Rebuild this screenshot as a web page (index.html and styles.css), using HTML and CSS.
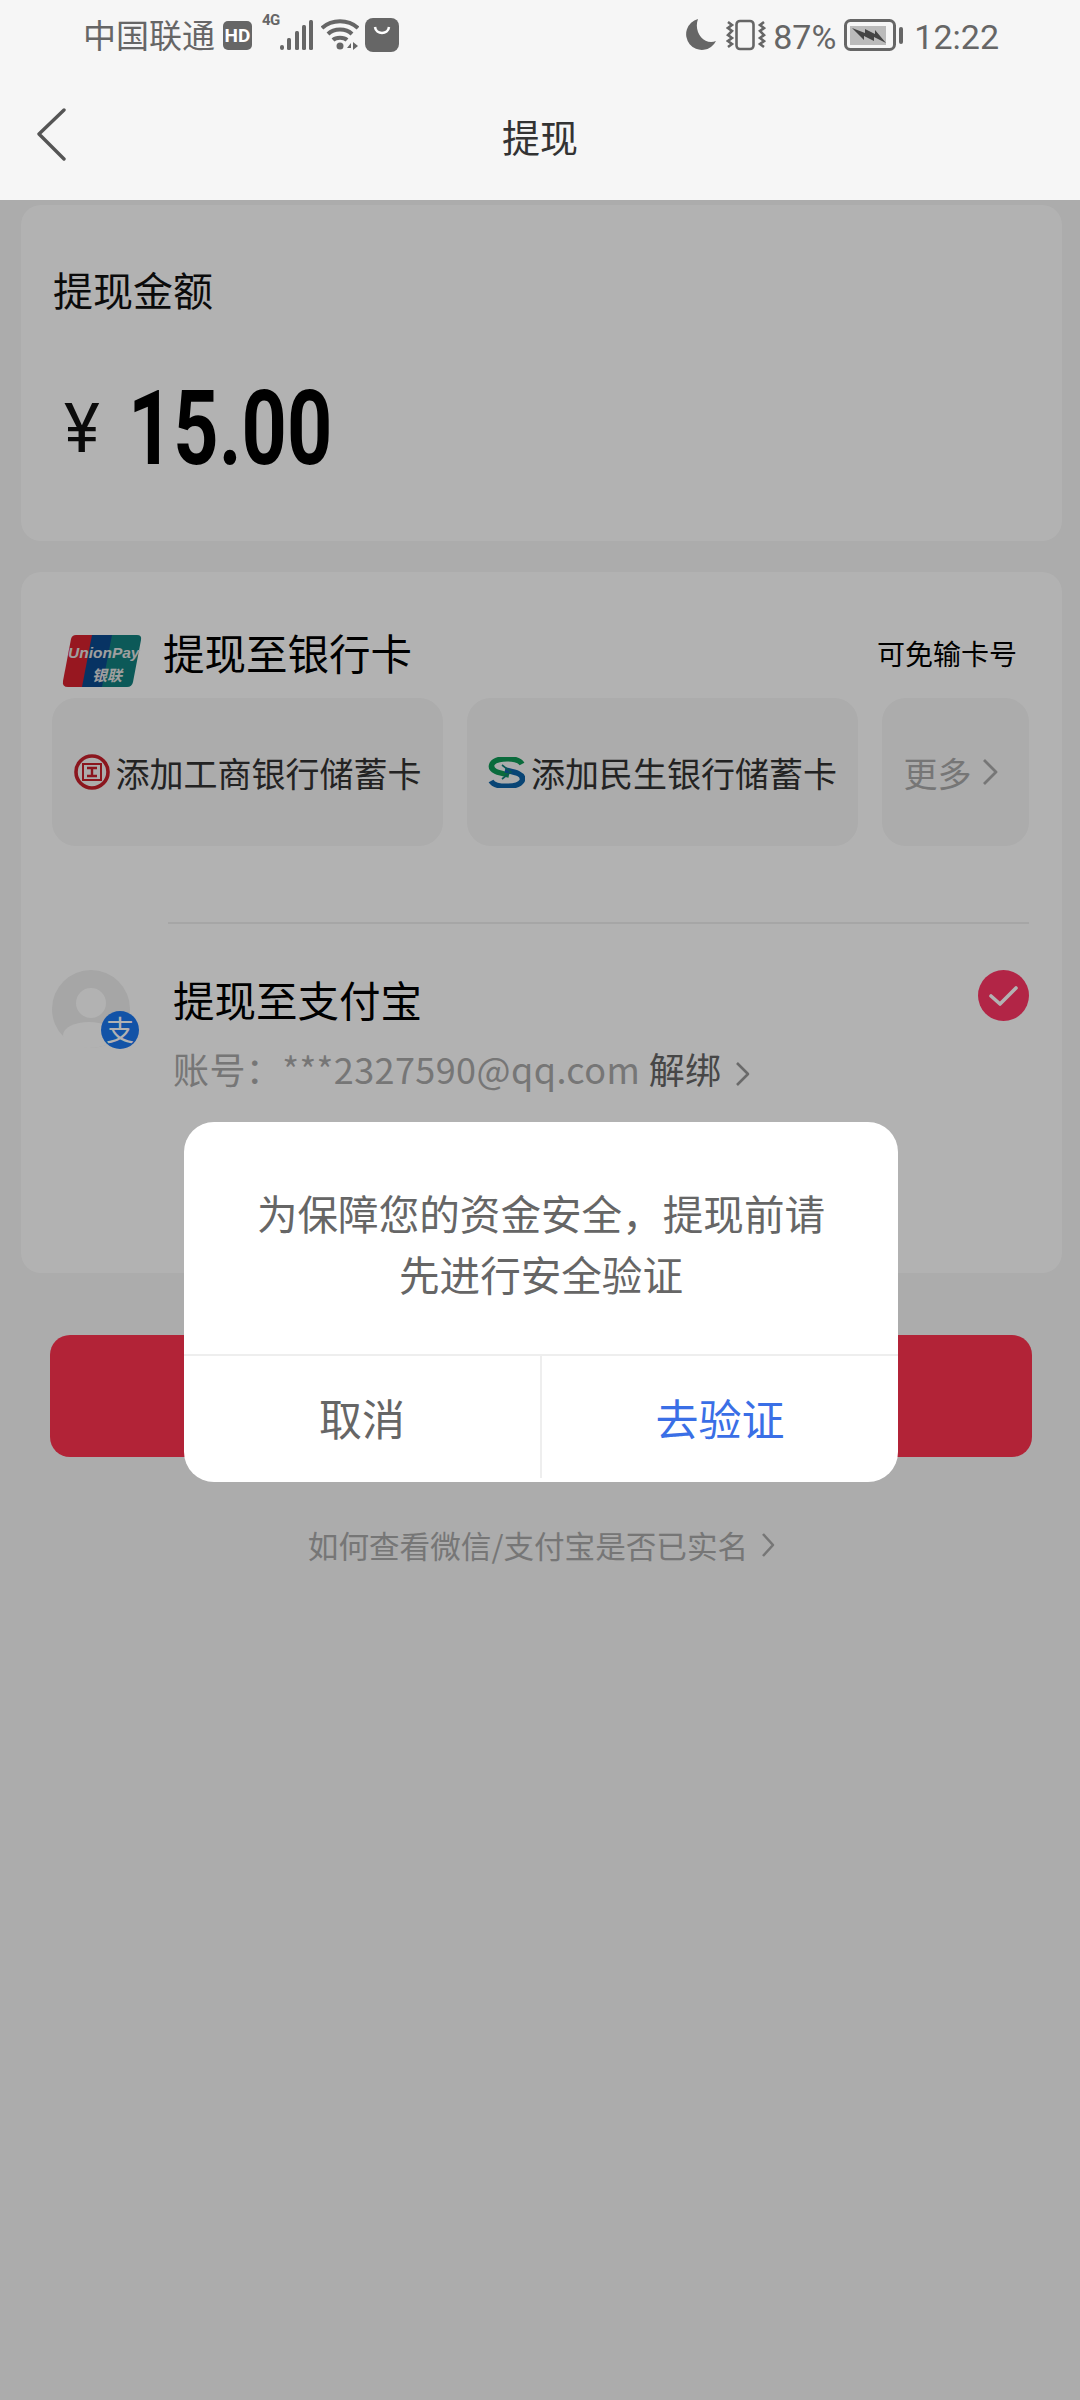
FILE: index.html
```html
<!DOCTYPE html>
<html lang="zh-CN">
<head>
  <meta charset="UTF-8" />
  <title>提现</title>
  <meta name="viewport" content="width=device-width, initial-scale=1.0" />
  <link rel="stylesheet" href="styles.css">
</head>
<body>
  <div class="top">
    <div class="status">
      <span class="carrier">中国联通</span>
      <span class="hd">HD</span>
      <span class="net">4G</span>
      <svg class="signal" width="34" height="33" viewBox="0 0 34 33" fill="#666">
        <rect x="0" y="26" width="4" height="5" rx="2"/>
        <rect x="7" y="19" width="4" height="12" rx="1.5"/>
        <rect x="15" y="12" width="4" height="19" rx="1.5"/>
        <rect x="22" y="6" width="4" height="25" rx="1.5"/>
        <rect x="29" y="1" width="4" height="30" rx="1.5"/>
      </svg>
      <svg class="wifi" width="38" height="33" viewBox="0 0 38 33" fill="none" stroke="#666" stroke-width="4">
        <path d="M1 9C11 0 27 0 37 9"/>
        <path d="M7 15C13 9 25 9 31 15"/>
        <path d="M12 21C15 18 23 18 26 21"/>
        <circle cx="19" cy="27" r="3.5" fill="#666" stroke="none"/>
        <path d="M30 24l-4 5h4zM32 23v8l5-4z" fill="#666" stroke="none"/>
      </svg>
      <svg class="bag" width="34" height="34" viewBox="0 0 34 34">
        <rect width="34" height="34" rx="8" fill="#666"/>
        <path d="M10 9c1 8 13 8 14 0" fill="none" stroke="#fff" stroke-width="2.5"/>
      </svg>
      <svg class="moon" width="32" height="32" viewBox="0 0 32 32" fill="#666">
        <path d="M13 0A15.7 15.7 0 1 0 31 22C20 27 8 14 13 0Z"/>
      </svg>
      <svg class="vibrate" width="40" height="32" viewBox="0 0 40 32" fill="none" stroke="#666" stroke-width="2.6">
        <rect x="10.5" y="2" width="17" height="28" rx="3.5"/>
        <path d="M2 3l4 3-4 3 4 3-4 4 4 3-4 3 4 3-4 3"/>
        <path d="M38 3l-4 3 4 3-4 3 4 4-4 3 4 3-4 3 4 3"/>
      </svg>
      <span class="percent">87%</span>
      <svg class="battery" width="60" height="32" viewBox="0 0 60 32">
        <rect x="1.5" y="1.5" width="49" height="29" rx="5" fill="none" stroke="#666" stroke-width="3"/>
        <rect x="6" y="7" width="36" height="19" fill="#bbb"/>
        <path d="M8 9l13 5 0-4 10 5 0-4 11 13-12-6 0 4-10-5 0 4z" fill="#444"/>
        <rect x="55" y="8" width="4" height="17" rx="2" fill="#666"/>
      </svg>
      <span class="time">12:22</span>
    </div>
    <div class="nav">
      <svg class="back" width="30" height="56" viewBox="0 0 30 56" fill="none" stroke="#555" stroke-width="3.4" stroke-linecap="round" stroke-linejoin="round">
        <path d="M27 3L2 27l25 25"/>
      </svg>
      <span class="nav-title">提现</span>
    </div>
  </div>

  <div class="page">
    <div class="card amount-card">
      <div class="amount-label">提现金额</div>
      <div class="amount">
        <span class="yen">¥</span>
        <span class="value">15.00</span>
      </div>
    </div>

    <div class="card methods">
      <div class="bank-head">
        <svg class="unionpay" width="80" height="52" viewBox="0 0 80 52">
          <path d="M14 0h22l-10 52H6q-6 0-5-6l8-42q1-4 5-4z" fill="#d8222f"/>
          <path d="M30 0h24l-10 52H20z" fill="#0b4a8f"/>
          <path d="M50 0h25q5 0 4 5l-8 42q-1 5-6 5H40z" fill="#12807f"/>
          <text x="6" y="23" class="up-latin">UnionPay</text>
          <text x="30" y="46" class="up-cjk">银联</text>
        </svg>
        <span class="section-title">提现至银行卡</span>
        <span class="no-card">可免输卡号</span>
      </div>

      <div class="tiles">
        <div class="tile">
          <svg width="36" height="36" viewBox="0 0 36 36" fill="none" stroke="#c8202c">
            <circle cx="18" cy="18" r="16" stroke-width="3.6"/>
            <path d="M9 10h18v16H9z" stroke-width="2"/>
            <path d="M13 14h10M18 14v8M13 22h10" stroke-width="2.4"/>
          </svg>
          <span>添加工商银行储蓄卡</span>
        </div>
        <div class="tile">
          <svg width="37" height="31" viewBox="0 0 37 31" fill="none">
            <path d="M34 7C30 0 8 0 4 7c-3 7 7 9 17 11" stroke="#0f9a57" stroke-width="5.5"/>
            <path d="M3 24c4 7 27 7 31 0 3-7-7-9-17-11" stroke="#0d64a8" stroke-width="5.5"/>
            <path d="M14 8l9 7-9 7" stroke="#0f7f7a" stroke-width="1.6"/>
          </svg>
          <span>添加民生银行储蓄卡</span>
        </div>
        <div class="tile tile-more">
          <span>更多</span>
          <svg class="chev" width="16" height="28" viewBox="0 0 16 28" fill="none" stroke="#aaa" stroke-width="2.8" stroke-linejoin="round">
            <path d="M2 2l12 12L2 26"/>
          </svg>
        </div>
      </div>

      <div class="divider"></div>

      <div class="alipay">
        <div class="avatar">
          <svg width="78" height="78" viewBox="0 0 78 78">
            <circle cx="39" cy="39" r="39" fill="#eee"/>
            <circle cx="39" cy="33" r="15" fill="#fff"/>
            <ellipse cx="37" cy="65" rx="26" ry="13" fill="#fff"/>
          </svg>
          <span class="badge">支</span>
        </div>
        <div class="alipay-text">
          <div class="alipay-title">提现至支付宝</div>
          <div class="account">账号：***2327590@qq.com <span class="unbind">解绑</span>
            <svg class="chev-small" width="15" height="26" viewBox="0 0 15 26" fill="none" stroke="#999" stroke-width="2.6" stroke-linejoin="round">
              <path d="M2 2l11 11L2 24"/>
            </svg>
          </div>
        </div>
        <svg class="check" width="51" height="51" viewBox="0 0 51 51">
          <circle cx="25.5" cy="25.5" r="25.5" fill="#ff3565"/>
          <path d="M13 26l9 8 16-16" fill="none" stroke="#fff" stroke-width="3.6" stroke-linecap="round" stroke-linejoin="round"/>
        </svg>
      </div>
    </div>

    <button class="submit">提现</button>

    <div class="hint">
      <span>如何查看微信/支付宝是否已实名</span>
      <svg width="14" height="26" viewBox="0 0 14 26" fill="none" stroke="#aaa" stroke-width="2.6" stroke-linejoin="round">
        <path d="M2 2l10 11L2 24"/>
      </svg>
    </div>

    <div class="overlay">
      <div class="dialog">
        <div class="dialog-text">为保障您的资金安全，提现前请<br>先进行安全验证</div>
        <div class="dialog-actions">
          <button class="dialog-btn">取消</button>
          <button class="dialog-btn confirm">去验证</button>
        </div>
      </div>
    </div>
  </div>
</body>
</html>
```

FILE: styles.css
```css
* {
  box-sizing: border-box;
}

html, body {
  margin: 0;
  padding: 0;
}

body {
  width: 1080px;
  height: 2400px;
  overflow: hidden;
  font-family: "Noto Sans CJK SC", "Noto Sans", sans-serif;
  background: #f6f6f6;
}

.top {
  height: 200px;
  background: #f6f6f6;
}

/* status bar */
.status {
  height: 70px;
  padding: 0 81px 0 83px;
  display: flex;
  align-items: center;
  color: #666;
}

.carrier {
  font-size: 33px;
  line-height: 70px;
  width: 140px;
  margin-top: -2px;
  white-space: nowrap;
}

.hd {
  width: 29px;
  height: 29px;
  border-radius: 5px;
  background: #666;
  color: #fff;
  font: 700 19px/29px "Roboto", sans-serif;
  text-align: center;
}

.net {
  font: 700 15px/15px "Roboto", sans-serif;
  margin: -30px 0 0 10px;
  width: 17px;
  letter-spacing: -0.5px;
}

.signal {
  margin-left: 1px;
}

.wifi {
  margin-left: 7px;
}

.bag {
  margin-left: 6px;
}

.moon {
  margin-left: auto;
}

.vibrate {
  margin-left: 9px;
}

.percent, .time {
  font: 400 34px/70px "Roboto", sans-serif;
  margin-top: 3px;
}

.percent {
  margin-left: 7px;
}

.battery {
  margin-left: 8px;
}

.time {
  margin-left: 10px;
}

/* title bar */
.nav {
  height: 130px;
  padding: 0 0 0 37px;
  position: relative;
  display: flex;
  align-items: center;
}

.nav-title {
  position: absolute;
  left: 0;
  right: 0;
  text-align: center;
  font-size: 38px;
  color: #333;
}

/* page under the dialog */
.page {
  position: relative;
  height: 2200px;
  padding: 5px 18px 0 21px;
  background: #f6f6f6;
}

.card {
  background: #fff;
  border-radius: 20px;
}

.amount-card {
  height: 336px;
  padding: 54px 32px 0;
}

.amount-label {
  font-size: 40px;
  line-height: 60px;
  color: #111;
}

.amount {
  display: flex;
  align-items: center;
  margin-top: 55px;
  color: #000;
}

.yen {
  font: 400 68px/110px "Roboto", sans-serif;
  margin-left: 11px;
  width: 64px;
  color: #111;
}

.value {
  display: inline-block;
  font: 700 104px/110px "Roboto", sans-serif;
  transform: scaleX(0.76);
  transform-origin: left center;
}

.methods {
  margin-top: 31px;
  height: 701px;
  padding: 63px 33px 0 31px;
}

.bank-head {
  height: 52px;
  padding: 0 12px 0 10px;
  display: flex;
  align-items: center;
}

.up-latin {
  font: italic 700 15.5px "Liberation Sans", sans-serif;
  fill: #e4e4e4;
}

.up-cjk {
  font: italic 700 15px "Noto Sans CJK SC", sans-serif;
  fill: #e4e4e4;
}

.section-title {
  margin: 0 0 18px 21px;
  font-size: 41.5px;
  color: #000;
}

.no-card {
  margin: 0 0 16px auto;
  font-size: 28px;
  color: #000;
}

.tiles {
  margin-top: 11px;
  display: flex;
  gap: 24px;
}

.tile {
  width: 391px;
  height: 148px;
  border-radius: 24px;
  background: #f6f6f6;
  display: flex;
  align-items: center;
  justify-content: center;
  gap: 6px;
  font-size: 34px;
  color: #333;
  white-space: nowrap;
}

.tile-more {
  width: 147px;
  padding-right: 10px;
  gap: 10px;
  color: #aaa;
}

.divider {
  height: 2px;
  margin: 76px 0 0 116px;
  background: #eee;
}

.alipay {
  margin-top: 46px;
  display: flex;
  align-items: flex-start;
}

.avatar {
  position: relative;
  width: 78px;
  height: 78px;
  flex: none;
}

.avatar svg {
  display: block;
}

.badge {
  position: absolute;
  right: -9px;
  bottom: -1px;
  width: 38px;
  height: 38px;
  border-radius: 50%;
  background: #1b78f0;
  color: #fff;
  font-size: 28px;
  line-height: 36px;
  text-align: center;
}

.alipay-text {
  margin: 4px 0 0 43px;
}

.alipay-title {
  font-size: 41.5px;
  line-height: 50px;
  color: #000;
}

.account {
  margin-top: 19px;
  font-size: 36px;
  line-height: 50px;
  letter-spacing: 0.4px;
  color: #aaa;
  white-space: nowrap;
}

.unbind {
  color: #666;
}

.chev-small {
  margin-left: 5px;
  vertical-align: -3px;
}

.check {
  margin-left: auto;
  flex: none;
}

.submit {
  display: block;
  width: 982px;
  height: 122px;
  margin: 62px 0 0 29px;
  border: none;
  border-radius: 20px;
  background: #ff334f;
  color: #fff;
  font-family: inherit;
  font-size: 40px;
}

.hint {
  margin-top: 68px;
  display: flex;
  align-items: center;
  justify-content: center;
  gap: 13px;
  font-size: 30.6px;
  line-height: 40px;
  color: #aaa;
}

/* dialog */
.overlay {
  position: absolute;
  inset: 0;
  padding: 4px 0 0 2px;
  background: rgba(0,0,0,0.3);
  display: flex;
  align-items: center;
  justify-content: center;
}

.dialog {
  width: 714px;
  height: 360px;
  background: #fff;
  border-radius: 30px;
  overflow: hidden;
}

.dialog-text {
  height: 232px;
  padding-top: 60px;
  text-align: center;
  font-size: 40.6px;
  line-height: 61px;
  color: #666;
}

.dialog-actions {
  height: 128px;
  padding-bottom: 4px;
  display: flex;
  border-top: 2px solid #eee;
}

.dialog-btn {
  flex: 1;
  border: none;
  background: none;
  font-family: inherit;
  font-size: 43px;
  color: #666;
}

.confirm {
  color: #3a6fe6;
  border-left: 2px solid #eee;
}
```
